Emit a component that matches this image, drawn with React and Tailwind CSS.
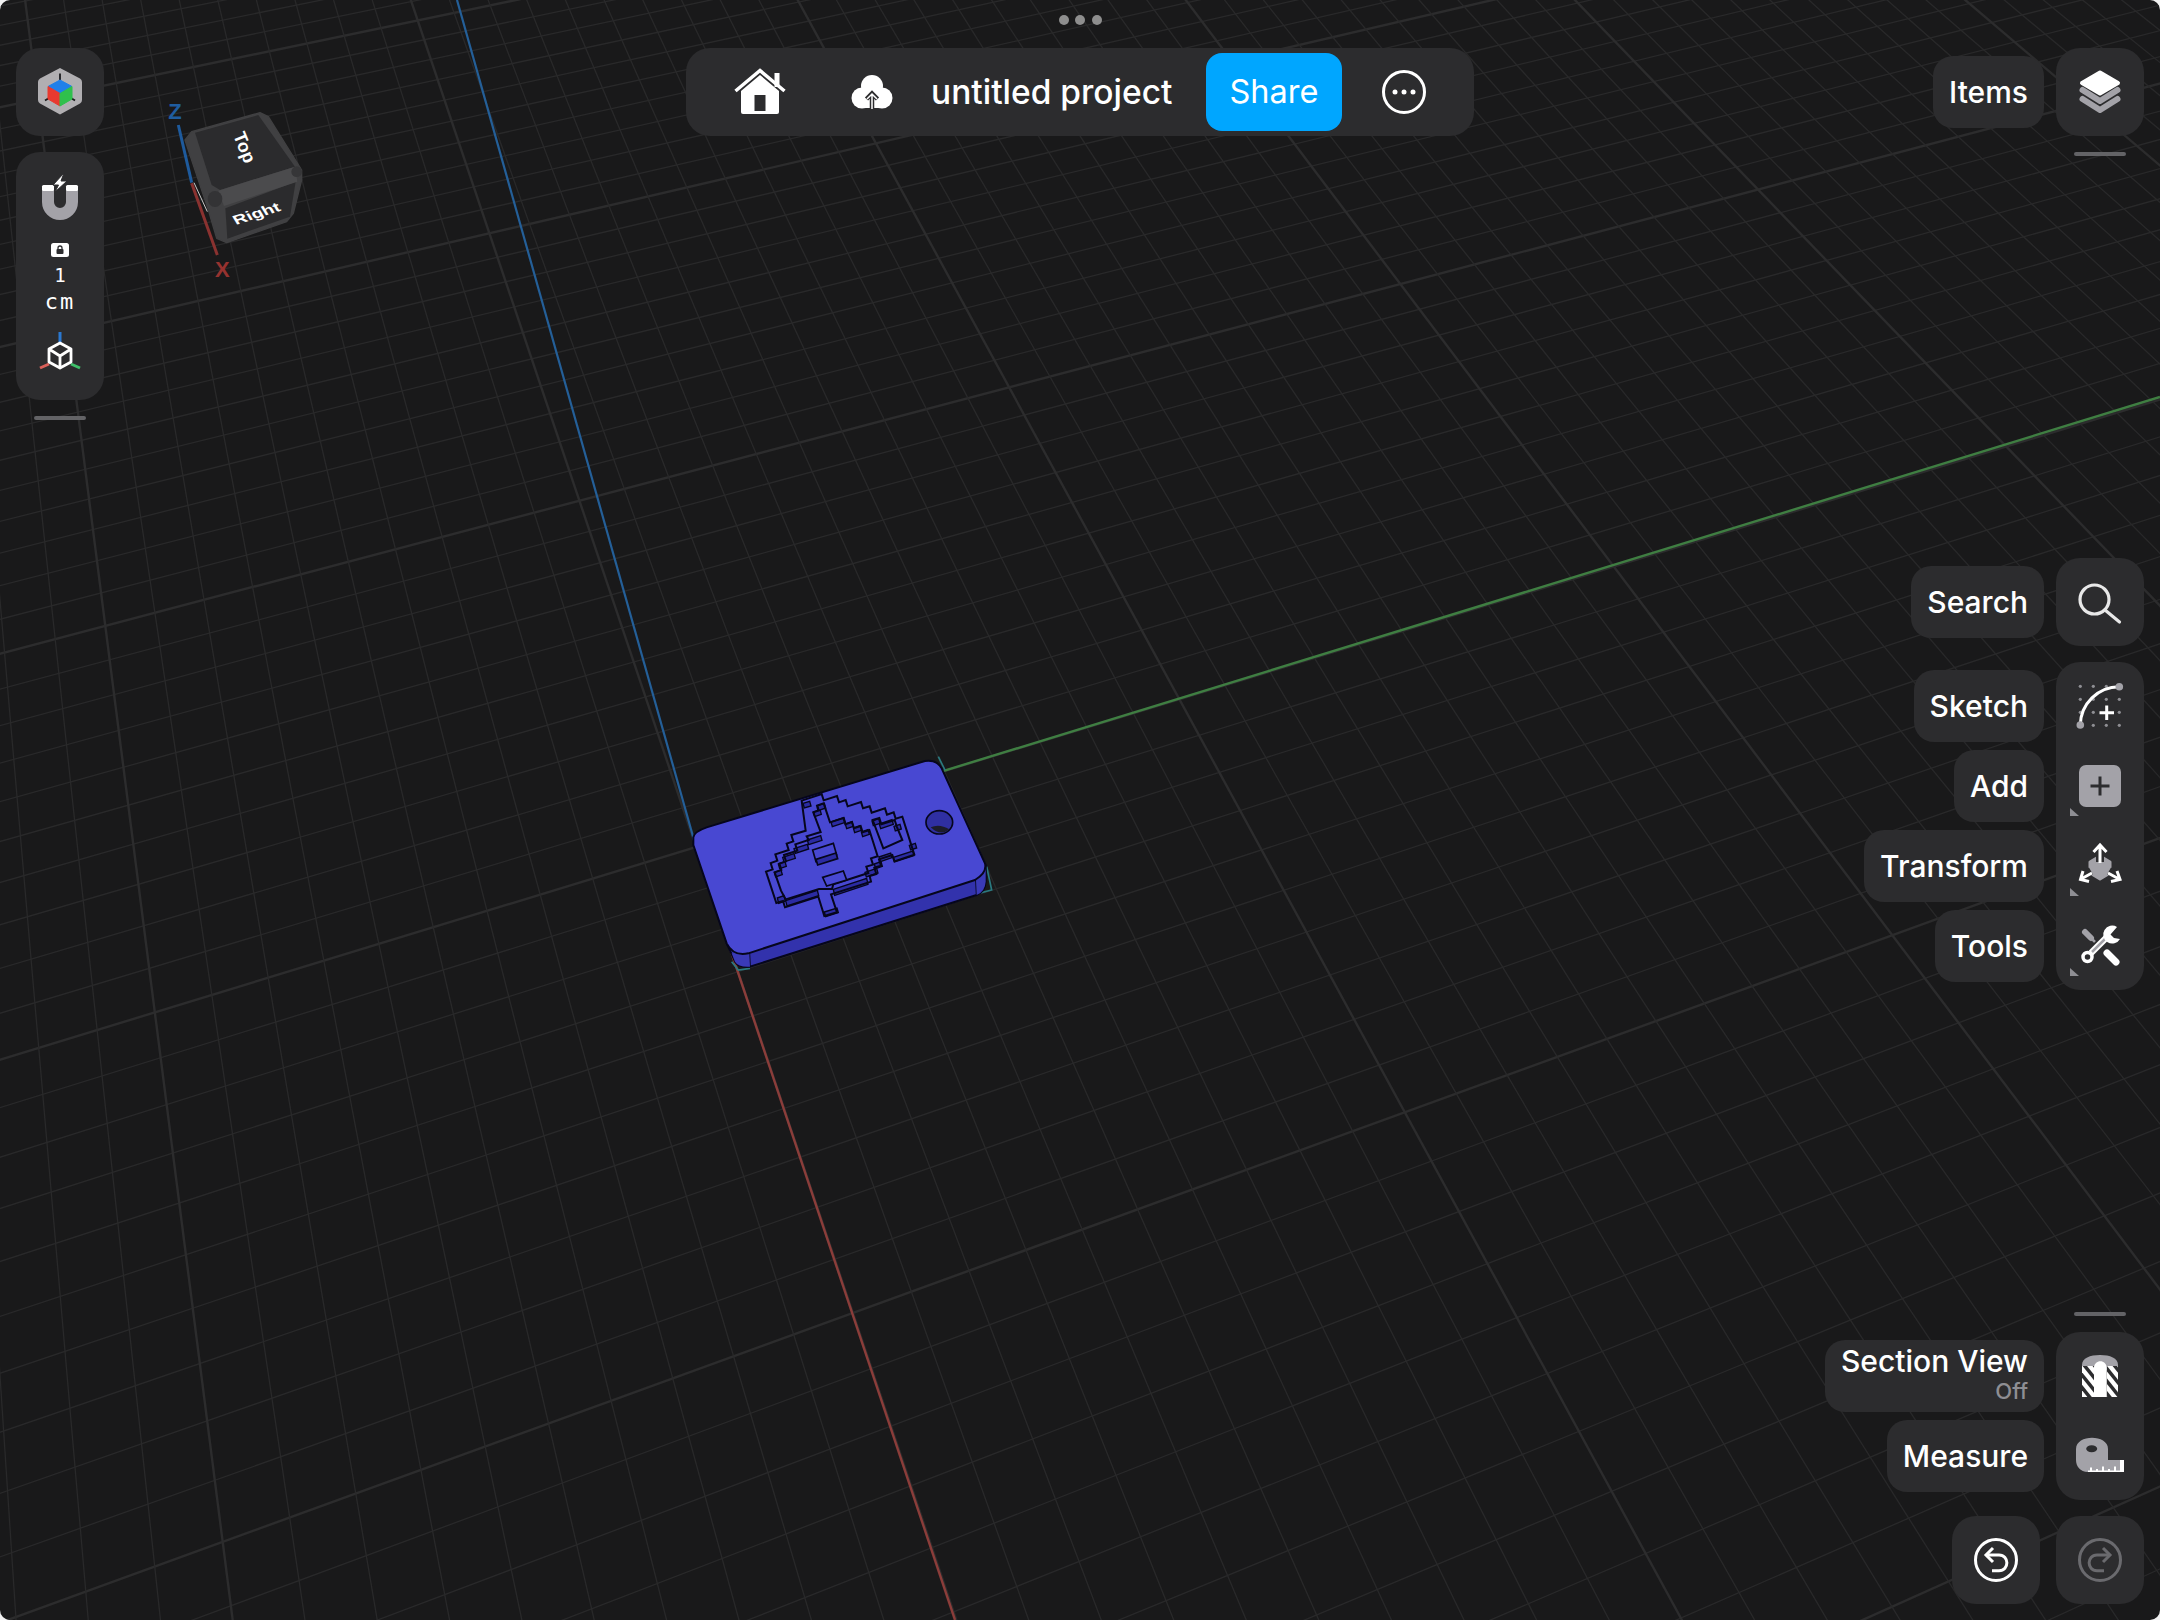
import React from "react";

const O = [696, 847];
const VX = [-212, -1850];
const VY = [9750, -1920];
const A = 0.01473;
const B = 0.00564;

function project(u, v) {
  const w = 1 + u * A + v * B;
  return [
    (O[0] + u * A * VX[0] + v * B * VY[0]) / w,
    (O[1] + u * A * VX[1] + v * B * VY[1]) / w,
  ];
}

function range(a, b) {
  const out = [];
  for (let i = a; i <= b; i++) out.push(i);
  return out;
}

function GridLine({ p, vp, major }) {
  const x1 = p[0] + (p[0] - vp[0]) * 2;
  const y1 = p[1] + (p[1] - vp[1]) * 2;
  return (
    <line
      x1={x1}
      y1={y1}
      x2={vp[0]}
      y2={vp[1]}
      stroke={major ? "#2c2c2d" : "#29292a"}
      strokeWidth={major ? 2.4 : 1.3}
    />
  );
}

function Grid() {
  return (
    <g>
      {range(-50, 90).map((u) => (
        <GridLine key={"u" + u} p={project(u, 0)} vp={VY} major={u % 10 === 0} />
      ))}
      {range(-110, 130).map((v) => (
        <GridLine key={"v" + v} p={project(0, v)} vp={VX} major={v % 10 === 0} />
      ))}
    </g>
  );
}

const INK = "#06061c";
const WALL = "#2b2ba2";
const FACE = "#4848d2";

const BLOCKS = [
  [412, 300, 452, 287, 14], [372, 326, 412, 313, 14], [338, 352, 372, 341, 14], [325, 372, 345, 365, 14], [313, 397, 333, 390, 14],
  [322, 474, 342, 467, 16], [347, 482, 442, 451, 16], [490, 448, 590, 415, 18], [463, 516, 501, 504, 14], [585, 397, 620, 385, 14],
  [613, 372, 633, 365, 14], [627, 351, 662, 339, 14], [670, 352, 728, 333, 14], [718, 316, 736, 310, 14], [399, 190, 419, 184, 14],
  [430, 216, 450, 209, 14], [443, 197, 463, 190, 14], [483, 246, 522, 233, 14], [526, 252, 546, 245, 14], [550, 264, 570, 257, 14],
  [574, 276, 594, 269, 14], [606, 243, 626, 236, 14], [628, 252, 666, 239, 14], [672, 259, 690, 253, 14],
];

const OUTER =
  "395,182 455,162 461,181 501,168 507,187 527,180 533,199 573,186 579,205 599,199 605,218 645,205 651,224 671,217 677,236 697,230 727,325 733,344 673,364 667,345 627,358 633,377 613,383 619,402 599,408 603,425 483,463 501,517 463,528 445,470 345,502 339,483 319,489 288,395 308,388 302,369 322,362 316,343 356,330 350,311 370,304 364,285 407,272";
const INNER =
  "430,217 445,212 441,197 461,190 480,247 520,234 526,253 546,246 552,265 572,258 578,277 598,270 617,330 623,349 603,355 609,374 589,380 595,399 490,433 486,447 447,447 347,478 333,452 314,397 334,390 328,371 348,364 342,345 382,332 376,313 416,300 410,289 452,276";
const EAR = "608,240 628,234 634,253 674,240 680,259 697,300 640,325";

function Keychain() {
  return (
    <g transform="translate(670 740) scale(0.33333)">
      <path d="M185 665 L205 690 L240 685 M805 50 L825 90 M950 380 L965 450 L925 460" fill="none" stroke="#2a7a80" strokeWidth="5" />
      <path d="M170 610 L195 665 Q205 682 240 680 L920 465 Q945 455 947 425 L947 375 Z" fill="#3232ac" stroke={INK} strokeWidth="6" strokeLinejoin="round" />
      <path d="M238 640 L240 680 M918 420 L920 465" stroke={INK} strokeWidth="5" />
      <path d="M185 640 L238 640 L240 680 Q205 682 195 665 Z" fill="#3a3ab8" />
      <path d="M918 420 L947 375 L947 425 Q945 455 920 465 Z" fill="#3a3ab8" />
      <path
        d="M70 292 Q72 275 110 262 L765 63 Q800 58 815 85 L945 370 Q952 398 915 420 L235 640 Q190 650 170 610 L70 315 Z"
        fill={FACE}
        stroke={INK}
        strokeWidth="6"
        strokeLinejoin="round"
      />
      <ellipse cx="808" cy="247" rx="40" ry="35" fill="#2f2fa2" stroke={INK} strokeWidth="5" />
      <path d="M782 262 Q808 250 838 268 Q812 290 782 262 Z" fill="#1c1c2a" />
      {BLOCKS.map((b, i) => (
        <polygon
          key={i}
          points={`${b[0]},${b[1]} ${b[2]},${b[3]} ${b[2] + 4},${b[3] + b[4]} ${b[0] + 4},${b[1] + b[4]}`}
          fill={WALL}
          stroke={INK}
          strokeWidth="4"
        />
      ))}
      <g fill="none" stroke={INK} strokeWidth="6" strokeLinejoin="miter">
        <polygon points={OUTER} />
        <polygon points={INNER} />
        <polygon points={EAR} />
      </g>
      <polygon points="428,330 490,310 500,345 438,365" fill={FACE} stroke={INK} strokeWidth="5" />
      <polygon points="438,358 498,339 503,356 443,375" fill={WALL} stroke={INK} strokeWidth="5" />
      <polygon points="458,412 520,393 530,420 470,438" fill={FACE} stroke={INK} strokeWidth="5" />
    </g>
  );
}

function ViewCube() {
  return (
    <g transform="scale(0.33333)">
      <path
        d="M555 420 L575 395 L780 338 L805 350 L905 510 L905 540 L880 640 L860 665 L680 728 L650 715 L625 630 Z"
        fill="#404042"
        stroke="#404042"
        strokeWidth="4"
        strokeLinejoin="round"
      />
      <polygon points="585,398 775,345 885,500 660,570 635,555" fill="#2b2b2d" />
      <polygon points="676,625 887,545 870,650 682,716" fill="#2b2b2d" />
      <polygon points="655,572 885,500 892,545 672,618" fill="#4b4b4d" />
      <ellipse cx="645" cy="597" rx="22" ry="24" fill="#333335" />
      <circle cx="890" cy="515" r="16" fill="#363638" />
      <line x1="535" y1="375" x2="575" y2="548" stroke="#1e5a9c" strokeWidth="9" />
      <line x1="575" y1="550" x2="652" y2="765" stroke="#8a3230" strokeWidth="9" />
      <line x1="582" y1="548" x2="622" y2="635" stroke="#c9c9c9" strokeWidth="3" />
      <text
        x="0"
        y="0"
        transform="translate(699 405) rotate(68)"
        fontFamily="'Liberation Sans', sans-serif"
        fontSize="54"
        fontWeight="700"
        fill="#ffffff"
      >
        Top
      </text>
      <text
        x="0"
        y="0"
        transform="matrix(1.120 -0.360 0.450 0.750 708 675)"
        fontFamily="'Liberation Sans', sans-serif"
        fontSize="48"
        fontWeight="700"
        fill="#ffffff"
      >
        Right
      </text>
      <text x="505" y="357" fontFamily="'Liberation Sans', sans-serif" fontSize="66" fontWeight="700" fill="#1f5da0">
        Z
      </text>
      <text x="645" y="832" fontFamily="'Liberation Sans', sans-serif" fontSize="66" fontWeight="700" fill="#96322f">
        X
      </text>
    </g>
  );
}

function Scene() {
  return (
    <svg className="absolute inset-0" width="2160" height="1620" viewBox="0 0 2160 1620">
      <Grid />
      <line x1="457" y1="0" x2="696" y2="847" stroke="#245f98" strokeWidth="2.2" />
      <line x1="696" y1="847" x2="955" y2="1620" stroke="#8b3d3a" strokeWidth="2.4" />
      <line x1="696" y1="847" x2="2160" y2="397" stroke="#3f7e42" strokeWidth="2.4" />
      <Keychain />
      <ViewCube />
    </svg>
  );
}

const GRAY = "#a3a2a8";

function Logo() {
  return (
    <svg width="48" height="52" viewBox="0 0 48 52">
      <path d="M24 2 L44 12.500 Q46 13.500 46 16 L46 34 Q46 36.500 44 37.500 L24 48.500 L4 37.500 Q2 36.500 2 34 L2 16 Q2 13.500 4 12.500 Z" fill="#b1afb2" />
      <path d="M24 7.500 V14 M9 34.500 L13 32 M39 34.500 L35 32" stroke="#1b1b1d" strokeWidth="1.800" />
      <polygon points="24,14 36,20.500 24,27.500 12,20.500" fill="#1f80ea" stroke="#1f80ea" strokeLinejoin="round" />
      <polygon points="12,20.500 24,27.500 24,40 12,33" fill="#e8392f" stroke="#e8392f" strokeLinejoin="round" />
      <polygon points="36,20.500 24,27.500 24,40 36,33" fill="#2fc04c" stroke="#2fc04c" strokeLinejoin="round" />
    </svg>
  );
}

function Magnet() {
  return (
    <svg width="40" height="50" viewBox="0 0 40 50">
      <path d="M2 13 H14 V29 A6 6 0 0 0 26 29 V13 H38 V29 A18 18 0 0 1 2 29 Z" fill={GRAY} />
      <rect x="2" y="12" width="12" height="6" rx="1.5" fill="#ffffff" />
      <rect x="26" y="12" width="12" height="6" rx="1.500" fill="#ffffff" />
      <polygon points="24,0 13,12 18.500,12 15,19 27,8 21,8" fill="#ffffff" stroke="#2c2c2e" strokeWidth="1" />
    </svg>
  );
}

function LockChip() {
  return (
    <svg width="18" height="14" viewBox="0 0 18 14">
      <rect width="18" height="14" rx="2.500" fill="#ffffff" />
      <rect x="5.500" y="6" width="7" height="5" rx="1" fill="#2c2c2e" />
      <path d="M7 6 V5 A2 2 0 0 1 11 5 V6" fill="none" stroke="#2c2c2e" strokeWidth="1.300" />
    </svg>
  );
}

function AxisIcon() {
  return (
    <svg width="48" height="40" viewBox="0 0 48 40" fill="none">
      <line x1="24" y1="1" x2="24" y2="11" stroke="#2a78d0" strokeWidth="3" />
      <line x1="4" y1="37" x2="13" y2="33" stroke="#d9605a" strokeWidth="3" />
      <line x1="44" y1="37" x2="35" y2="33" stroke="#3fc06a" strokeWidth="3" />
      <path d="M24 12 L35 18 V31 L24 37 L13 31 V18 Z M13 18 L24 25 L35 18 M24 25 V37" stroke="#ffffff" strokeWidth="2.800" strokeLinejoin="round" />
    </svg>
  );
}

function Home() {
  return (
    <svg width="56" height="50" viewBox="0 0 56 50">
      <rect x="42.500" y="6" width="5" height="14" fill="#ffffff" />
      <path d="M3.500 24 L28 3.500 L52.500 24" fill="none" stroke="#ffffff" strokeWidth="3.500" />
      <path d="M28 8 L47 24 V45 Q47 47 45 47 H11 Q9 47 9 45 V24 Z" fill="#ffffff" />
      <rect x="22.500" y="28" width="11" height="16" fill="#2c2c2e" />
    </svg>
  );
}

function CloudIcon() {
  return (
    <svg width="44" height="36" viewBox="0 0 44 36">
      <circle cx="12" cy="24" r="10.500" fill="#ffffff" />
      <circle cx="32" cy="24" r="10.500" fill="#ffffff" />
      <circle cx="22" cy="12" r="11" fill="#ffffff" />
      <rect x="12" y="20" width="20" height="14" fill="#ffffff" />
      <path d="M22 34 V20 M16.500 25 L22 19.500 L27.500 25" fill="none" stroke="#2c2c2e" strokeWidth="4.500" />
      <path d="M22 35 V20 M17 25 L22 20 L27 25" fill="none" stroke="#ffffff" strokeWidth="1.500" />
    </svg>
  );
}

function MoreIcon() {
  return (
    <svg width="46" height="46" viewBox="0 0 46 46">
      <circle cx="23" cy="23" r="20.500" fill="none" stroke="#ffffff" strokeWidth="3" />
      <circle cx="14" cy="23" r="2.500" fill="#ffffff" />
      <circle cx="23" cy="23" r="2.500" fill="#ffffff" />
      <circle cx="32" cy="23" r="2.500" fill="#ffffff" />
    </svg>
  );
}

function LayersIcon() {
  return (
    <svg width="88" height="88" viewBox="0 0 88 88" fill="none">
      <path d="M26.500 51 L44 62 L61.500 51" stroke={GRAY} strokeWidth="6" strokeLinejoin="round" strokeLinecap="round" />
      <path d="M26.500 42 L44 53 L61.500 42" stroke={GRAY} strokeWidth="6" strokeLinejoin="round" strokeLinecap="round" />
      <path d="M26 35 L44 24.500 L62 35 L44 45.500 Z" fill="#ffffff" stroke="#ffffff" strokeWidth="4" strokeLinejoin="round" />
    </svg>
  );
}

function SearchIcon() {
  return (
    <svg width="88" height="88" viewBox="0 0 88 88" fill="none" stroke="#e8e8e8" strokeWidth="3.200">
      <circle cx="38.500" cy="41.500" r="14.500" />
      <line x1="49" y1="52" x2="63.500" y2="64" strokeLinecap="round" />
    </svg>
  );
}

function SketchIcon() {
  const p = [12.3, 25.3, 38.3, 51.3];
  return (
    <svg width="64" height="64" viewBox="0 0 64 64" fill="none">
      {p.flatMap((x) => p.map((y) => <circle key={x + "-" + y} cx={x} cy={y} r="1.600" fill="#8e8e93" />))}
      <path d="M12.300 51 A39 39 0 0 1 51.300 12.700" stroke="#ffffff" strokeWidth="3" />
      <circle cx="12.300" cy="51" r="3.800" fill={GRAY} />
      <circle cx="51.300" cy="12.700" r="3.800" fill={GRAY} />
      <path d="M38.700 31 V46 M31 38.700 H46" stroke="#2c2c2e" strokeWidth="5" />
      <path d="M38.700 31.500 V46 M31.500 38.700 H46" stroke="#ffffff" strokeWidth="3" />
    </svg>
  );
}

function AddIcon() {
  return (
    <svg width="64" height="64" viewBox="0 0 64 64" fill="none">
      <rect x="11" y="11" width="42" height="42" rx="7" fill={GRAY} />
      <path d="M32 22.500 V41.500 M22.500 32 H41.500" stroke="#2c2c2e" strokeWidth="3" />
    </svg>
  );
}

function TransformIcon() {
  return (
    <svg width="64" height="64" viewBox="0 0 64 64" fill="none">
      <polygon points="32,22 42,28 42,39 32,45 22,39 22,28" fill={GRAY} stroke={GRAY} strokeWidth="3" strokeLinejoin="round" />
      <path d="M32 28 V12 M23 37 L11 44 M41 37 L53 44" stroke="#2c2c2e" strokeWidth="8" />
      <path d="M32 29 V12 M25.500 18 L32 11 L38.500 18" stroke="#ffffff" strokeWidth="3" />
      <path d="M24 39 L13 45 M15 37 L12.500 45.500 L21 47.500" stroke="#ffffff" strokeWidth="3" />
      <path d="M40 39 L51 45 M49 37 L52 45.500 L43 47.500" stroke="#ffffff" strokeWidth="3" />
    </svg>
  );
}

function ToolsIcon() {
  return (
    <svg width="64" height="64" viewBox="0 0 64 64" fill="none" strokeLinecap="round">
      <path d="M17 18 L23 24" stroke={GRAY} strokeWidth="6" />
      <path d="M23 24 L33 34" stroke={GRAY} strokeWidth="2.500" />
      <path d="M39 39 L48 48" stroke="#ffffff" strokeWidth="7" />
      <path d="M23 39 L39 23" stroke="#2c2c2e" strokeWidth="10" strokeLinecap="butt" />
      <path d="M23 39 L39 23" stroke="#ffffff" strokeWidth="6.500" strokeLinecap="butt" />
      <path d="M24 38 L38 24" stroke={GRAY} strokeWidth="2.500" strokeLinecap="butt" />
      <circle cx="19.500" cy="43" r="4.500" stroke="#ffffff" strokeWidth="3.500" />
      <path d="M49 13 A9 9 0 1 0 52 25 L46 24 L42.500 20.500 Z" fill="#ffffff" />
    </svg>
  );
}

function SectionIcon() {
  const stripes = [-8, 2, 12, 22, 32, 42, 52, 62];
  return (
    <svg width="64" height="64" viewBox="0 0 64 64" fill="none">
      <defs>
        <clipPath id="hatch">
          <path d="M14 22 H26 V53 H14 Z M38.700 22 H50 V53 H38.700 Z" />
        </clipPath>
      </defs>
      <path d="M14 26 V21 C14 14 22 11 32 11 C42 11 50 14 50 21 V26 Z" fill={GRAY} />
      <g clipPath="url(#hatch)">
        <rect x="14" y="20" width="36" height="33" fill="#ffffff" />
        {stripes.map((s) => (
          <line key={s} x1={s} y1="16" x2={s + 40} y2="66" stroke="#2c2c2e" strokeWidth="3.500" />
        ))}
      </g>
      <path d="M26 53 V24 C26 15 38.700 15 38.700 24 V53 Z" fill="#ffffff" />
    </svg>
  );
}

function MeasureIcon() {
  return (
    <svg width="64" height="64" viewBox="0 0 64 64" fill="none">
      <path d="M8 25 C8 10 40 10 40 25 V36 H53 V48 H20 C12 48 8 42 8 36 Z" fill={GRAY} />
      <ellipse cx="23.700" cy="24.800" rx="5.500" ry="3.500" fill="#2c2c2e" />
      <path d="M22 48 V43.500 H24 V48 M28 48 V45 H30 V48 M34 48 V42.500 H36 V48 M40 48 V45 H42 V48 M46 48 V42.500 H48 V48" fill="#ffffff" />
      <rect x="52" y="36" width="4" height="12" fill="#ffffff" />
      <rect x="20" y="46.500" width="36" height="1.500" fill="#ffffff" />
    </svg>
  );
}

function UndoIcon({ color, flip }) {
  return (
    <svg width="88" height="88" viewBox="0 0 88 88" fill="none" stroke={color} strokeWidth="3" className={flip ? "-scale-x-100" : ""}>
      <circle cx="44" cy="44" r="20.500" />
      <path d="M34 39 H47 C57.500 39 57.500 54.700 47 54.700 H40" />
      <path d="M41 32 L34 39 L41 46" />
    </svg>
  );
}

function Corner() {
  return (
    <svg className="absolute left-0 top-0" width="64" height="64" viewBox="0 0 64 64">
      <polygon points="2,54 2,62 11,62" fill="#8e8e93" />
    </svg>
  );
}

function Label({ children }) {
  return (
    <div className="flex h-[72px] items-center justify-end whitespace-nowrap rounded-[20px] bg-[#2c2c2e] px-4 text-[30px] font-medium text-white">
      {children}
    </div>
  );
}

function ToolRow({ label, icon, corner }) {
  return (
    <div className="flex h-[80px] items-center justify-end gap-3">
      <Label>{label}</Label>
      <div className="relative flex h-[64px] w-[88px] items-center justify-center">
        {corner ? (
          <div className="relative h-[64px] w-[64px]">
            {icon}
            <Corner />
          </div>
        ) : (
          icon
        )}
      </div>
    </div>
  );
}

function Handle() {
  return <div className="h-1 w-[52px] rounded-sm bg-[#636366]" />;
}

function Tile({ children }) {
  return <div className="flex h-[88px] w-[88px] items-center justify-center rounded-[24px] bg-[#2c2c2e]">{children}</div>;
}

export default function App() {
  return (
    <div className="h-[1620px] w-[2160px] bg-[#f2f2f2]" style={{ fontFamily: "Inter, 'Liberation Sans', sans-serif" }}>
      <div className="relative h-full w-full overflow-hidden rounded-[10px] bg-[#19191a]">
        <Scene />

        <div className="absolute left-4 top-12 flex w-[88px] flex-col items-center">
          <Tile>
            <Logo />
          </Tile>
          <div className="mt-4 flex h-[248px] w-[88px] flex-col items-center rounded-[24px] bg-[#2c2c2e] pt-[21px]">
            <Magnet />
            <div className="mt-[20px] leading-none">
              <LockChip />
            </div>
            <div className="mt-[6px] text-[19px] leading-[24px] text-white" style={{ fontFamily: "'DejaVu Sans Mono', monospace" }}>1</div>
            <div className="mt-[2px] text-[22px] leading-[26px] tracking-[2px] text-white" style={{ fontFamily: "'DejaVu Sans Mono', monospace" }}>cm</div>
            <div className="mt-[16px]">
              <AxisIcon />
            </div>
          </div>
          <div className="mt-4">
            <Handle />
          </div>
        </div>

        <div className="absolute left-0 right-0 top-0 flex flex-col items-center">
          <div className="mt-[15px] flex h-[10px] items-center gap-[6.500px]">
            <div className="h-[10px] w-[10px] rounded-full bg-[#8e8e8e]" />
            <div className="h-[10px] w-[10px] rounded-full bg-[#8e8e8e]" />
            <div className="h-[10px] w-[10px] rounded-full bg-[#8e8e8e]" />
          </div>
          <div className="mt-[23px] flex h-[88px] w-[788px] items-center rounded-[24px] bg-[#2c2c2e] pl-[46px]">
            <Home />
            <div className="ml-[62px]">
              <CloudIcon />
            </div>
            <div className="ml-[37px] w-[241px] whitespace-nowrap text-[33.500px] font-medium text-white">untitled project</div>
            <div className="ml-[34px] flex h-[78px] w-[136px] items-center justify-center rounded-[16px] bg-[#00a6ff] text-[32.500px] text-white">Share</div>
            <div className="ml-[39px]">
              <MoreIcon />
            </div>
          </div>
        </div>

        <div className="absolute bottom-4 right-4 top-12 flex w-[340px] flex-col items-end">
          <div className="flex items-center gap-3">
            <Label>Items</Label>
            <Tile>
              <LayersIcon />
            </Tile>
          </div>
          <div className="mt-4 flex w-[88px] justify-center">
            <Handle />
          </div>

          <div className="mt-[402px] flex items-center gap-3">
            <Label>Search</Label>
            <Tile>
              <SearchIcon />
            </Tile>
          </div>

          <div className="relative mt-4 w-full">
            <div className="absolute bottom-0 right-0 top-0 w-[88px] rounded-[24px] bg-[#2c2c2e]" />
            <div className="relative flex flex-col py-1">
              <ToolRow label="Sketch" icon={<SketchIcon />} />
              <ToolRow label="Add" icon={<AddIcon />} corner />
              <ToolRow label="Transform" icon={<TransformIcon />} corner />
              <ToolRow label="Tools" icon={<ToolsIcon />} corner />
            </div>
          </div>

          <div className="mt-auto flex w-[88px] justify-center">
            <Handle />
          </div>

          <div className="relative mt-4 w-full">
            <div className="absolute bottom-0 right-0 top-0 w-[88px] rounded-[24px] bg-[#2c2c2e]" />
            <div className="relative flex flex-col py-1">
              <div className="flex h-[80px] items-center justify-end gap-3">
                <div className="flex h-[72px] flex-col items-end whitespace-nowrap rounded-[20px] bg-[#2c2c2e] px-4 pt-[3px] text-white">
                  <div className="text-[30px] font-medium leading-[36px]">Section View</div>
                  <div className="text-[22px] font-medium leading-[24px] text-[#8e8e93]">Off</div>
                </div>
                <div className="flex w-[88px] justify-center">
                  <SectionIcon />
                </div>
              </div>
              <div className="flex h-[80px] items-center justify-end gap-3">
                <Label>Measure</Label>
                <div className="flex w-[88px] justify-center">
                  <MeasureIcon />
                </div>
              </div>
            </div>
          </div>

          <div className="mt-4 flex gap-4">
            <Tile>
              <UndoIcon color="#ffffff" />
            </Tile>
            <Tile>
              <UndoIcon color="#6a6a6e" flip />
            </Tile>
          </div>
        </div>
      </div>
    </div>
  );
}
